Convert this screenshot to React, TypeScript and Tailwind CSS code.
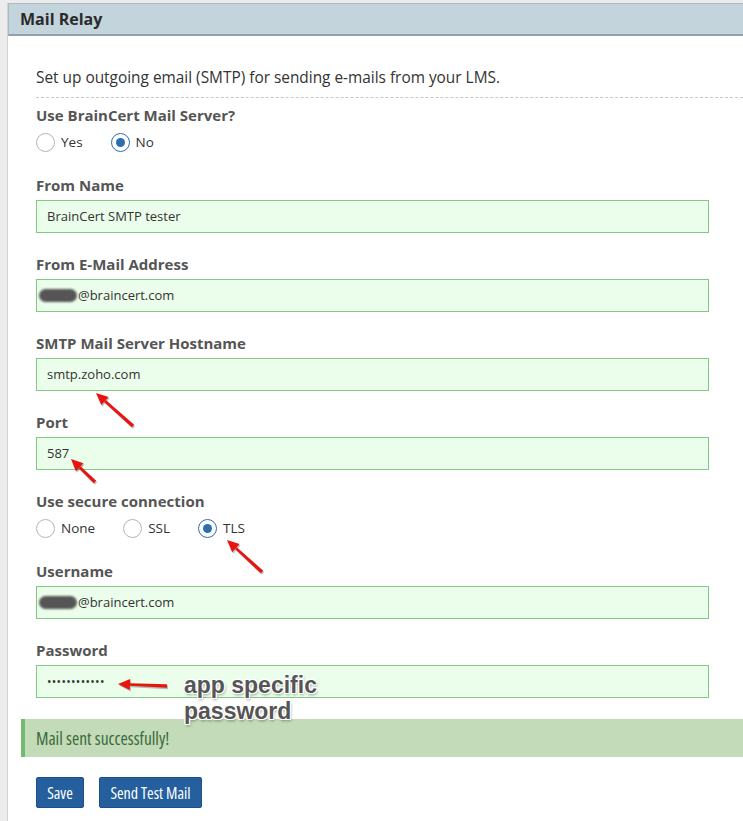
import React from "react";

const sans = { fontFamily: '"Open Sans", "Noto Sans", Arial, sans-serif' };

function Radio({ checked, label }: { checked?: boolean; label: string }) {
  return (
    <span className="inline-flex items-center">
      <span
        className={
          "w-[19px] h-[19px] rounded-full border flex items-center justify-center bg-white " +
          (checked ? "border-[#2c6db3] border-[1.5px]" : "border-[#b5b5b5]")
        }
      >
        {checked && <span className="w-[9px] h-[9px] rounded-full bg-[#2c6db3]" />}
      </span>
      <span className="ml-[6px] text-[13.5px] text-[#333]">{label}</span>
    </span>
  );
}

function Field({ label, children, first }: { label: string; children: React.ReactNode; first?: boolean }) {
  return (
    <div className={first ? "mt-[21px]" : "mt-[20px]"}>
      <div className="h-[22px] leading-[22px] text-[15px] font-bold text-[#555]">{label}</div>
      <div className="mt-[4px] w-[673px] h-[33px] bg-[#ebfdeb] border border-[#83c883] flex items-center pl-[10px] text-[13px] text-[#333]">
        {children}
      </div>
    </div>
  );
}

function Blur() {
  return <span className="inline-block w-[38px] h-[13px] rounded-full bg-[#555] blur-[1px] -ml-[8px] mr-[1px]" />;
}

function Arrow({ x1, y1, x2, y2 }: { x1: number; y1: number; x2: number; y2: number }) {
  const dx = x2 - x1;
  const dy = y2 - y1;
  const len = Math.sqrt(dx * dx + dy * dy);
  const ux = dx / len;
  const uy = dy / len;
  const px = -uy;
  const py = ux;
  const headLen = 12;
  const headW = 5.5;
  const bx = x2 - ux * headLen;
  const by = y2 - uy * headLen;
  const shaft = [
    [x1 + px * 1.8, y1 + py * 1.8],
    [bx + px * 1.3, by + py * 1.3],
    [bx - px * 1.3, by - py * 1.3],
    [x1 - px * 1.8, y1 - py * 1.8],
  ];
  const head = [
    [x2, y2],
    [bx + px * headW, by + py * headW],
    [bx - px * headW, by - py * headW],
  ];
  const pts = (a: number[][]) => a.map((p) => p.join(",")).join(" ");
  return (
    <g>
      <g transform="translate(1,1.5)" opacity="0.25">
        <polygon points={pts(shaft)} fill="#000" />
        <polygon points={pts(head)} fill="#000" />
      </g>
      <polygon points={pts(shaft)} fill="#e8140f" />
      <polygon points={pts(head)} fill="#e8140f" />
    </g>
  );
}

export default function App() {
  return (
    <div className="relative min-h-screen bg-[#ececec] pt-[3px] pl-[7px] overflow-hidden" style={sans}>
      <div className="bg-white border-l border-[#d2d2d2] min-h-[818px]">
        <div className="h-[33px] bg-[#c3d4dc] border-t border-l border-[#a8bac2] border-b-2 border-b-[#8fa2ab] pl-[11px] flex items-center">
          <span className="text-[16px] font-bold text-[#2a2a2a]">Mail Relay</span>
        </div>
        <div className="pl-[28px]">
          <div className="mt-[31px] h-[22px] leading-[22px] text-[15.4px] text-[#333]">
            Set up outgoing email (SMTP) for sending e-mails from your LMS.
          </div>
          <div className="mt-[8px] border-b border-dashed border-[#c8c8c8]" />
          <div className="mt-[6px] h-[22px] leading-[22px] text-[15px] font-bold text-[#555]">Use BrainCert Mail Server?</div>
          <div className="mt-[5px] h-[22px] flex items-center gap-[28px]">
            <Radio label="Yes" />
            <Radio checked label="No" />
          </div>
          <Field first label="From Name">BrainCert SMTP tester</Field>
          <Field label="From E-Mail Address">
            <Blur />
            @braincert.com
          </Field>
          <Field label="SMTP Mail Server Hostname">smtp.zoho.com</Field>
          <Field label="Port">587</Field>
          <div className="mt-[20px] h-[22px] leading-[22px] text-[15px] font-bold text-[#555]">Use secure connection</div>
          <div className="mt-[5px] h-[22px] flex items-center gap-[28px]">
            <Radio label="None" />
            <Radio label="SSL" />
            <Radio checked label="TLS" />
          </div>
          <Field first label="Username">
            <Blur />
            @braincert.com
          </Field>
          <Field label="Password">
            <span className="tracking-[0.3px] text-[12px]">••••••••••••</span>
          </Field>
          <div className="-ml-[15px] mt-[21px] h-[38px] bg-[#c3dbb8] border-l-[4px] border-[#70bb70] flex items-center pl-[11px]">
            <span className="text-[17.5px] text-[#3a6b3a] [font-stretch:condensed]">Mail sent successfully!</span>
          </div>
          <div className="mt-[20px] flex gap-[15px]">
            <button className="w-[48px] h-[31px] bg-[#255f9e] border border-[#1e4f86] rounded-[2px] text-white text-[16px] [font-stretch:condensed]">
              Save
            </button>
            <button className="w-[103px] h-[31px] bg-[#255f9e] border border-[#1e4f86] rounded-[2px] text-white text-[16px] [font-stretch:condensed]">
              Send Test Mail
            </button>
          </div>
        </div>
      </div>

      <svg className="absolute left-0 top-0 pointer-events-none" width="743" height="821">
        <Arrow x1={133} y1={426} x2={96} y2={393} />
        <Arrow x1={95} y1={482} x2={71} y2={459} />
        <Arrow x1={262} y1={572} x2={227} y2={540} />
        <Arrow x1={167} y1={686} x2={118} y2={684} />
      </svg>
      <div
        className="absolute left-[184px] top-[672px] text-[23px] leading-[26px] font-bold text-[#555]"
        style={{
          fontFamily: '"Liberation Sans", Arial, sans-serif',
          textShadow:
            "1px 0 0 #fff, -1px 0 0 #fff, 0 1px 0 #fff, 0 -1px 0 #fff, 1px 1px 0 #fff, -1px -1px 0 #fff, 1px -1px 0 #fff, -1px 1px 0 #fff, 1px 2px 3px rgba(0,0,0,0.4)",
        }}
      >
        app specific
        <br />
        password
      </div>
    </div>
  );
}
